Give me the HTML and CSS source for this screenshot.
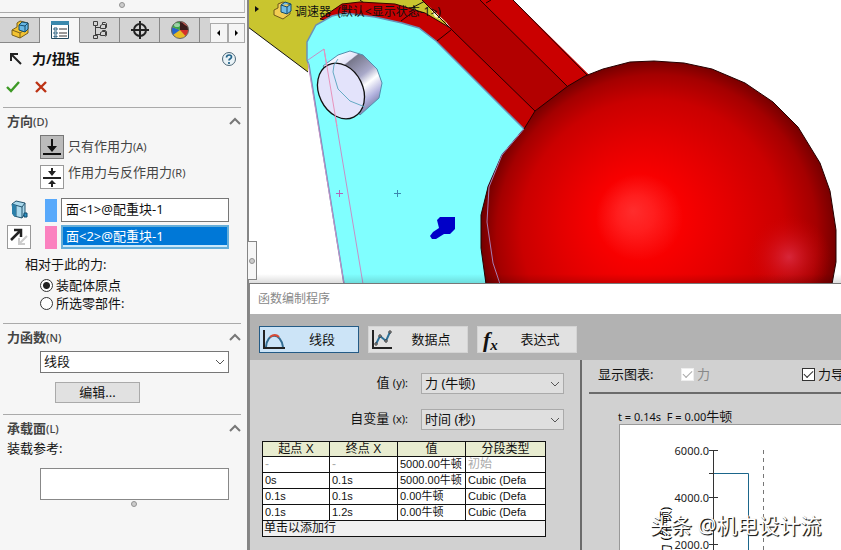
FILE: index.html
```html
<!DOCTYPE html>
<html lang="zh-CN">
<head>
<meta charset="utf-8">
<title>力/扭矩</title>
<link rel="stylesheet" href="styles.css">
</head>
<body>
<div class="app">
  <aside class="panel">
    <div class="strip"><i class="grip"></i></div>
    <nav class="tabs">
      <button class="tab" aria-label="模型"><svg width="20" height="20" viewBox="0 0 20 20"><path d="M2 10l5-3V3l3-2 8 2v10l-8 5-8-3z" fill="#f2c230" stroke="#79601b"/><path d="M2 10l8 3v5M10 13l3-2" fill="none" stroke="#79601b"/><path d="M9 5l3-3 6 1v6l-3 3-6-2z" fill="#67b7e3" stroke="#164d6d"/><path d="M9 5l6 1 3-3M15 6v6" fill="none" stroke="#164d6d"/></svg></button>
      <button class="tab active" aria-label="属性"><svg width="20" height="20" viewBox="0 0 20 20"><path d="M1.500 1.500h17v17h-17z" fill="#fff" stroke="#234a60"/><path d="M1 1h18v4H1z" fill="#3b89ad"/><path d="M4 8h3v2H4zM4 12h3v2H4zM4 16h3v1H4z" stroke="#245d7c" fill="none"/><path d="M9 9h8M9 13h8M9 16h8" stroke="#333"/></svg></button>
      <button class="tab" aria-label="配置"><svg width="20" height="20" viewBox="0 0 20 20" fill="none" stroke="#3e3e3e"><path d="M3.500 1.500h4v4h-4zM3.500 15.500h4v3h-4zM5.500 5v10M5.500 7.500h5M5.500 14.500h5"/><path d="M10.500 5.500l2-1h3v4h-5zM12.500 4.500v-2h3l1 1v4l-1 1M10.500 12.500l2-1h3v4h-5zM12.500 11.500v-1h3l1 1v4l-1 1"/></svg></button>
      <button class="tab" aria-label="尺寸"><svg width="20" height="20" viewBox="0 0 20 20" fill="none" stroke="#222" stroke-width="2"><circle cx="10" cy="10" r="6"/><path d="M10 1v18M1 10h18"/></svg></button>
      <button class="tab" aria-label="外观"><svg width="20" height="20" viewBox="0 0 20 20"><circle cx="10" cy="10" r="8.500" fill="#e7bb24"/><path d="M10 10L2 7a8.500 8.500 0 0 0 1 8z" fill="#2565cc"/><path d="M10 10L2 7a8.500 8.500 0 0 1 8-5.500z" fill="#39a44a"/><path d="M10 10V1.500a8.500 8.500 0 0 1 8.500 8.500z" fill="#3b1c1c"/><path d="M9 1.500c4 0 5 4 9 5-2-4-5-5-9-5z" fill="#e2564c"/><path d="M10 10l8.500 0a8.500 8.500 0 0 1-3 6z" fill="#d5302a"/><circle cx="10" cy="10" r="8.500" fill="none" stroke="#666"/><ellipse cx="7" cy="5" rx="3" ry="2" fill="#fff" opacity=".5"/></svg></button>
      <span class="tab cut"></span>
      <button class="arrow" aria-label="向左"><svg width="5" height="8"><path d="M4 1v6L1 4z"/></svg></button>
      <button class="arrow" aria-label="向右"><svg width="5" height="8"><path d="M1 1v6l3-3z"/></svg></button>
    </nav>
    <header class="head">
      <svg width="14" height="14" viewBox="0 0 14 14" fill="none" stroke="#222" stroke-width="2"><path d="M12 12L3 3M2 9V2h7"/></svg>
      <h1>力/扭矩</h1>
      <button class="plain" aria-label="帮助"><svg width="16" height="16" viewBox="0 0 16 16" fill="none"><circle cx="8" cy="8" r="6.500" fill="#eaf3f7" stroke="#4b6676"/><path d="M5.500 6.500c0-3.500 5-3 5-.5 0 2-2.500 1.500-2.500 3.500M8 11v2" stroke="#24648a" stroke-width="1.700"/></svg></button>
    </header>
    <div class="confirm">
      <button class="plain" aria-label="确定"><svg width="16" height="14" viewBox="0 0 16 14"><path d="M2 7l4 4 8-9" fill="none" stroke="#3e9a26" stroke-width="2.400"/></svg></button>
      <button class="plain" aria-label="取消"><svg width="14" height="14" viewBox="0 0 14 14"><path d="M2 2l10 10M12 2L2 12" stroke="#bd3315" stroke-width="2.400"/></svg></button>
    </div>

    <section class="group direction">
      <h2><span>方向<small>(D)</small></span><svg width="12" height="8"><path d="M1 7l5-5 5 5"/></svg></h2>
      <div class="mode"><button class="sq pressed" id="m1"><svg width="20" height="20" viewBox="0 0 20 20"><path d="M9 2h2v7h4l-5 6-5-6h4zM1 16h18v2H1z" fill="#111"/></svg></button><label for="m1">只有作用力<small>(A)</small></label></div>
      <div class="mode second"><button class="sq" id="m2"><svg width="20" height="20" viewBox="0 0 20 20"><path d="M9 1h2v3h3l-4 5-4-5h3zM1 10h18v2H1zM9 20h2v-3h3l-4-4-4 4h3z" fill="#222"/></svg></button><label for="m2">作用力与反作用力<small>(R)</small></label></div>
      <div class="pick">
        <svg class="lead" width="20" height="20" viewBox="0 0 20 20"><path d="M3 4l4-3 9 2v10l-3 5-8-2z" fill="#a9d8ec" stroke="#24546e"/><path d="M3 4l3 1 7 2 3-4M7 5v12M13 7v11" fill="none" stroke="#24546e"/><path d="M3 4l4 1v12l-4-3z" fill="#2b7fa9"/><path d="M15 13h3v4h-3z" fill="#2d92c5" stroke="#114a6b"/></svg>
        <i class="swatch blue"></i><input class="field" aria-label="作用面" value="面&lt;1&gt;@配重块-1">
      </div>
      <div class="pick">
        <button class="lead sq" aria-label="反向"><svg width="20" height="20" viewBox="0 0 20 20"><path d="M18 9l-7 7M10 11v6h6" fill="none" stroke="#ccc" stroke-width="2"/><path d="M2 13L11 4M5 3h7v7" fill="none" stroke="#222" stroke-width="2.500"/></svg></button>
        <i class="swatch pink"></i><input class="field selected" aria-label="参考面" value="面&lt;2&gt;@配重块-1">
      </div>
      <p class="relative">相对于此的力:</p>
      <label class="radio"><input type="radio" name="ref" checked>装配体原点</label>
      <label class="radio"><input type="radio" name="ref">所选零部件:</label>
    </section>

    <section class="group function">
      <h2><span>力函数<small>(N)</small></span><svg width="12" height="8"><path d="M1 7l5-5 5 5"/></svg></h2>
      <div class="select wide"><select aria-label="力函数"><option>线段</option></select><svg width="10" height="6"><path d="M1 1l4 4 4-4"/></svg></div>
      <button class="edit">编辑...</button>
    </section>

    <section class="group bearing">
      <h2><span>承载面<small>(L)</small></span><svg width="12" height="8"><path d="M1 7l5-5 5 5"/></svg></h2>
      <label for="load">装载参考:</label>
      <textarea id="load"></textarea>
      <i class="grip"></i>
    </section>
    <div class="splitter"><i class="grip"></i></div>
  </aside>

  <main class="work">
    <div class="scene">
      <svg class="model" viewBox="249 0 592 283" preserveAspectRatio="xMinYMin slice">
        <defs>
          <radialGradient id="ball" gradientUnits="userSpaceOnUse" cx="660" cy="238" r="182" fx="633" fy="211">
            <stop offset="0" stop-color="#ff2d2d"/><stop offset=".1" stop-color="#ff1e1e"/><stop offset=".24" stop-color="#f80000"/><stop offset=".48" stop-color="#e20000"/><stop offset=".72" stop-color="#ca0000"/><stop offset=".88" stop-color="#a40000"/><stop offset="1" stop-color="#680000"/>
          </radialGradient>
          <radialGradient id="glow" gradientUnits="userSpaceOnUse" cx="789" cy="257" r="42">
            <stop offset="0" stop-color="#dc3048" stop-opacity=".8"/><stop offset="1" stop-color="#d00000" stop-opacity="0"/>
          </radialGradient>
          <linearGradient id="pin" gradientUnits="userSpaceOnUse" x1="340" y1="55" x2="378" y2="103">
            <stop offset="0" stop-color="#f5f5ff"/><stop offset=".16" stop-color="#e5e5f8"/><stop offset=".18" stop-color="#77778b"/><stop offset=".48" stop-color="#a9a9c9"/><stop offset=".64" stop-color="#fff"/><stop offset=".85" stop-color="#b0b0dd"/><stop offset="1" stop-color="#8181a8"/>
          </linearGradient>
          <linearGradient id="shade" x1="0" y1="0" x2="0" y2="1"><stop offset="0" stop-opacity="0"/><stop offset="1" stop-opacity=".15"/></linearGradient>
        </defs>
        <path d="M248 0H424L446 22 448 45H308V72L248 27z" fill="#c9c52f"/>
        <path d="M248 27L308 72M360 0l4 3M402 13L427 0l20 22" fill="none" stroke="#111"/>
        <path d="M427 2l18 19-10-4z" fill="#fff5c9"/>
        <path d="M320 19L342 4 360 2 395 4 425 13 452 29 545 120 524 130 435 42z" fill="#c40000" stroke="#300"/>
        <path d="M422 0H513L590 76 568 95 535 111 452 30 446 22z" fill="#b20000"/>
        <path d="M480 0H513L590 76 568 87z" fill="#ca0000"/>
        <path d="M422 0L452 30 537 113M480 0L568 87M513 0L588 76M486 3l5-3M451 30L437 41M401 21l12-9" fill="none" stroke="#260000"/>
        <path d="M307 60V42L316 25 332 16 345 13 375 17 402 23 419 28 436 41 524 129 502 155 488 187 486 284H344L309 65z" fill="#80ffff" stroke="#6991b7" stroke-width="1.500"/>
        <path d="M486 284L481 248V215L488 187 502 155 524 129 535 111 568 86 585 76 603 69 630 62 654 61 684 63 712 69 745 83 773 102 798 127 820 163 830 191 836 230V262L832 284z" fill="url(#ball)" stroke="#250000"/>
        <circle cx="789" cy="257" r="42" fill="url(#glow)"/>
        <path d="M524 129L502 155 489 187 487 222 493 263 500 284" fill="none" stroke="#a77bb2"/>
        <path d="M308 63L344 284M308 60L324 49 363 284" fill="none" stroke="#c68fc6"/>
        <path d="M323 66L338 55 350 51 363 55 377 69 382 83 379 98 360 115z" fill="url(#pin)" stroke="#548eae"/>
        <ellipse cx="341" cy="91" rx="22" ry="29" transform="rotate(-26 341 91)" fill="#e3e3fb" stroke="#111" stroke-width="1.300"/>
        <path d="M338 59l-4 6-1 7 5 17 12 12 15 6" fill="none" stroke="#65aac4"/>
        <path d="M324 49L337 126" stroke="#e893bc"/>
        <path d="M336 193.500h7M339.500 190v7" stroke="#b067ba"/><path d="M394 193.500h7M397.500 190v7" stroke="#3c88af"/>
        <path d="M437 220l3-3h15v12l-5 5h-6l-8 5h-4l-2-3 3-4 6-4z" fill="#0000c8"/>
        <path d="M248 274H841V284H248z" fill="url(#shade)"/>
        <path d="M255 6v6l4-3z" fill="#111"/>
        <path d="M274 10l4-2V4l5-2 7 3v9l-7 5-9-4z" fill="#f3cd54" stroke="#6f591a"/><path d="M281 5l4-3 6 2v7l-4 3-6-2zM281 5l6 2 4-3M287 7v7" fill="#70bce8" stroke="#174a68"/>
        <text class="tree" x="295" y="16" xml:space="preserve">调速器  (默认&lt;显示状态-1&gt;)</text>
      </svg>
    </div>

    <section class="dialog">
      <div class="title">函数编制程序</div>
      <div class="toolbar">
        <button class="tool on"><svg width="24" height="22" viewBox="0 0 24 22" fill="none"><path d="M2 1v18h21" stroke="#222" stroke-width="2"/><path d="M4 18C5 3 19 3 21 18" stroke="#326c91" stroke-width="2"/><path d="M8 8q5-4 9 0" stroke="#d94a35" stroke-width="2"/></svg><span>线段</span></button>
        <button class="tool"><svg width="24" height="22" viewBox="0 0 24 22" fill="none"><path d="M2 1v18h19" stroke="#222" stroke-width="2"/><path d="M5 15l4-8 6 5 4-9" stroke="#2c6f96" stroke-width="2"/><path d="M4 14h2v2H4zM8 6h2v2H8zM14 11h2v2h-2zM18 2h2v2h-2z" fill="#fff" stroke="#333"/></svg><span>数据点</span></button>
        <button class="tool"><b class="fx">f<sub>x</sub></b><span>表达式</span></button>
      </div>
      <div class="content">
        <div class="form">
          <div class="row"><label for="yv">值 <small>(y):</small></label><div class="select"><select id="yv"><option>力 (牛顿)</option></select><svg width="10" height="6"><path d="M1 1l4 4 4-4"/></svg></div></div>
          <div class="row"><label for="xv">自变量 <small>(x):</small></label><div class="select"><select id="xv"><option>时间 (秒)</option></select><svg width="10" height="6"><path d="M1 1l4 4 4-4"/></svg></div></div>
          <table>
            <colgroup><col class="c1"><col class="c2"><col class="c2"><col class="c3"></colgroup>
            <thead><tr><th>起点 X</th><th>终点 X</th><th>值</th><th>分段类型</th></tr></thead>
            <tbody>
              <tr><td class="dim">-</td><td class="dim">-</td><td>5000.00牛顿</td><td class="dim">初始</td></tr>
              <tr><td>0s</td><td>0.1s</td><td>5000.00牛顿</td><td>Cubic (Defa</td></tr>
              <tr><td>0.1s</td><td>0.1s</td><td>0.00牛顿</td><td>Cubic (Defa</td></tr>
              <tr><td>0.1s</td><td>1.2s</td><td>0.00牛顿</td><td>Cubic (Defa</td></tr>
              <tr class="add"><td colspan="4">单击以添加行</td></tr>
            </tbody>
          </table>
        </div>
        <div class="graphs">
          <div class="shows">
            <span class="caption">显示图表:</span>
            <label class="check off"><input type="checkbox" checked disabled>力</label>
            <label class="check"><input type="checkbox" checked>力导</label>
          </div>
          <p class="readout">t = 0.14s  F = 0.00<span>牛顿</span></p>
          <div class="chart">
            <svg width="221" height="128">
              <path d="M93.500 25v103M89 25.500h9M89 48.500h5M89 72.500h9M89 119.500h9" stroke="#333" fill="none"/>
              <path d="M94 48.500h34.500V128" stroke="#1b668b" fill="none"/>
              <path d="M143.500 25v103" stroke="#777" stroke-dasharray="4 4"/>
              <g class="ticks"><text x="89" y="30">6000.0</text><text x="89" y="77">4000.0</text><text x="89" y="124">2000.0</text></g>
              <text class="axis" transform="translate(50 132) rotate(-90)">力 (牛顿)</text>
            </svg>
            <div class="mark">头条 @机电设计流</div>
          </div>
        </div>
      </div>
    </section>
  </main>
</div>
</body>
</html>
```
FILE: styles.css
```css
* { box-sizing: border-box; }
body { margin: 0; font: 13px/18px "Noto Sans", "Noto Sans CJK SC", sans-serif; color: #111; }
button, input, select, textarea { font: inherit; color: inherit; margin: 0; padding: 0; border-radius: 0; }
h1, h2, p { margin: 0; }
small { font-size: 11px; }
svg { display: block; flex: none; }
.app { display: grid; grid-template-columns: 249px minmax(0, 1fr); height: 100vh; overflow: hidden; }
.panel { position: relative; background: #f6f6f6; border-right: 2px solid #858585; padding-right: 2px; }
.grip { display: block; width: 6px; height: 6px; border: 1px solid #929292; border-radius: 50%; background: #ccc; }
.strip { height: 13px; border-bottom: 1px solid #aaa; border-right: 1px solid #bbb; display: flex; justify-content: center; padding-top: 2px; }
.tabs { display: flex; height: 26px; margin-top: 4px; border-top: 1px solid #888; }
.tab { flex: 0 0 40px; border: 0; border-right: 1px solid #888; border-bottom: 1px solid #888; background: #d3d3d3; display: flex; align-items: center; justify-content: center; }
.tab.active { background: #f6f6f6; border-bottom-color: #f6f6f6; }
.tab.cut { flex-basis: 10px; border-right: 0; }
.arrow { flex: 1; margin-top: 5px; border: 1px solid #aaa; background: #f5f5f5; display: flex; align-items: center; justify-content: center; }
.head { display: flex; align-items: center; height: 32px; padding: 0 8px 0 9px; }
.head h1 { flex: 1; font-size: 14px; line-height: 20px; margin-left: 9px; }
.plain { border: 0; background: none; }
.confirm { display: flex; align-items: center; gap: 13px; height: 24px; padding-left: 5px; }
.group { margin: 0 4px 0 3px; border-top: 1px solid #aaa; padding-left: 4px; }
.direction { margin-top: 8px; height: 216px; }
.function { height: 91px; }
.group h2 { display: flex; align-items: center; justify-content: space-between; height: 26px; font-size: 13px; color: #444; }
.group h2 small { font-weight: 500; }
.group h2 svg { fill: none; stroke: #777; stroke-width: 2; }
.mode { display: flex; align-items: center; height: 24px; margin: 1px 0 0 33px; color: #444; }
.mode label { margin: 0 0 2px 4px; }
.mode.second { margin-top: 6px; }
.mode.second label { margin-bottom: 10px; }
.sq { width: 24px; height: 24px; border: 1px solid #999; background: #fff; display: flex; align-items: center; justify-content: center; }
.sq.pressed { background: #bbb; border-color: #777; }
.pick { display: flex; align-items: center; height: 24px; margin: 9px 12px 0 0; }
.pick + .pick { margin-top: 3px; }
.lead { width: 24px; flex: none; }
.swatch { width: 12px; height: 23px; margin: 0 4px 0 14px; flex: none; }
.blue { background: #58a9fb; }
.pink { background: #fb81bf; }
.field { flex: 1; min-width: 0; height: 24px; border: 1px solid #777; background: #fff; padding: 0 4px 4px; }
.field.selected { border: 2px solid #65aed9; color: #fff; background: linear-gradient(#0078d7 0 18px, #c9e8fb 18px); padding: 0 3px 3px; }
.relative { margin: 6px 0 3px 18px; }
.radio { display: flex; align-items: center; gap: 3px; height: 18px; margin-left: 33px; }
.radio input { appearance: none; width: 13px; height: 13px; border: 1px solid #333; border-radius: 50%; background: #fff; }
.radio input:checked { background: radial-gradient(#222 0 3px, #fff 4px); }
.select { display: grid; align-items: center; width: 143px; }
.select select { grid-area: 1 / 1; appearance: none; height: 21px; width: 100%; border: 1px solid #aaa; background: #dfdfdf; padding: 0 3px 1px; line-height: 18px; }
.select svg { grid-area: 1 / 1; justify-self: end; margin-right: 4px; pointer-events: none; fill: none; stroke: #555; }
.select.wide { width: auto; margin: 1px 12px 0 33px; }
.wide select { height: 22px; background: #fff; border-color: #777; padding-bottom: 4px; }
.edit { display: block; width: 85px; height: 21px; margin: 9px 0 0 48px; border: 1px solid #aaa; background: #e1e1e1; line-height: 16px; padding-bottom: 2px; }
.bearing h2 + label { display: block; margin-top: -3px; line-height: 20px; }
.bearing textarea { display: block; width: calc(100% - 45px); height: 32px; margin: 10px 0 1px 33px; border: 1px solid #888; background: #fff; resize: none; }
.bearing > .grip { margin: 0 0 0 124px; }
.splitter { position: absolute; left: 248px; top: 241px; width: 9px; height: 39px; background: #f6f6f6; border: 1px solid #858585; border-left: 0; display: flex; align-items: center; justify-content: center; z-index: 2; }
.work { display: flex; flex-direction: column; min-width: 0; background: #fff; }
.scene { height: 283px; flex: none; overflow: hidden; }
.model { width: 100%; height: 100%; }
.tree { font-size: 12px; fill: #111; }
.dialog { flex: 1; min-height: 0; display: flex; flex-direction: column; border-top: 1px solid #777; border-left: 1px solid #888; background: #d1d1d1; }
.title { flex: none; height: 30px; padding-left: 8px; background: #fff; color: #888; font-size: 12px; line-height: 29px; }
.toolbar { flex: none; display: flex; gap: 9px; height: 46px; padding: 12px 0 0 9px; background: #b2b2b2; }
.tool { display: flex; align-items: center; width: 100px; height: 27px; border: 1px solid #d4d4d4; background: #e1e1e1; padding-left: 2px; }
.tool.on { border-color: #245b86; background: #cce4f7; }
.tool span { flex: 1; text-align: center; padding-bottom: 2px; }
.fx { width: 24px; font: italic bold 22px/22px "Liberation Serif", serif; text-align: left; padding-left: 3px; }
.fx sub { font-size: 15px; line-height: 10px; vertical-align: -3px; }
.content { flex: 1; min-height: 0; display: grid; grid-template-columns: 332px minmax(0, 1fr); }
.form { border-right: 2px solid #6b6b6b; padding: 13px 16px 0 12px; }
.row { display: flex; align-items: center; justify-content: flex-end; gap: 13px; height: 21px; margin-bottom: 15px; }
.row label { line-height: 20px; padding-bottom: 2px; }
.row + table { margin-top: -4px; }
table { width: 284px; table-layout: fixed; border-collapse: collapse; font: 11px/13px "Liberation Sans", "Noto Sans CJK SC", sans-serif; background: #fff; }
th, td { height: 16px; border: 1px solid #111; padding: 0 2px; white-space: nowrap; text-align: left; overflow: hidden; }
th { height: 15px; background: #e8ecd0; font-size: 12px; font-weight: 400; text-align: center; }
.c1 { width: 67px; }
.c2 { width: 68px; }
.dim { color: #aaa; font-size: 12px; }
.add td { background: #f0f0f0; font-size: 12px; padding: 0 1px; }
.graphs { min-width: 0; overflow: hidden; }
.shows { display: flex; align-items: center; height: 34px; margin-left: 7px; padding: 0 0 4px 9px; border-bottom: 2px solid #6b6b6b; white-space: nowrap; }
.caption { width: 83px; flex: none; }
.check { display: flex; align-items: center; gap: 3px; width: 121px; flex: none; }
.check input { appearance: none; width: 13px; height: 13px; border: 1px solid #333; background: #fff; display: grid; place-items: center; }
.check input::after { content: ""; width: 8px; height: 4px; border: solid #333; border-width: 0 0 1px 1px; transform: rotate(-45deg) translate(1px, -1px); }
.check.off { color: #888; }
.check.off input { border-color: #eee; }
.check.off input::after { border-color: #aaa; }
.readout { margin: 13px 0 0 36px; font-size: 11px; white-space: pre; }
.readout span { font-size: 13px; }
.chart { position: relative; margin: -2px 0 0 37px; height: 129px; border: 1px solid #999; border-right: 0; border-bottom: 0; background: #fff; }
.ticks { font-size: 11px; text-anchor: end; fill: #222; }
.axis { font-size: 13px; }
.mark { position: absolute; left: 30px; top: 87px; font-size: 21px; line-height: 26px; color: #fff; text-shadow: 1px 1px 0 #222, 1px 1px 1px #333; white-space: nowrap; }
```
